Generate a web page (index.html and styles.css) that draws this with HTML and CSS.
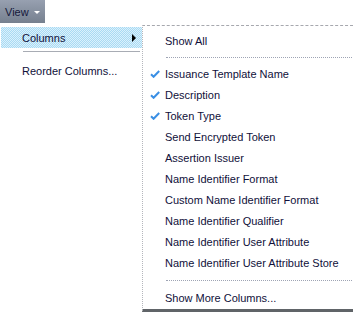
FILE: index.html
```html
<!DOCTYPE html>
<html lang="en">
<head>
  <meta charset="UTF-8">
  <title>View menu</title>
  <link rel="stylesheet" href="styles.css">
</head>
<body>
  <div class="toolbar">
    <div class="view-button">
      <span>View</span>
      <span class="caret"></span>
    </div>
  </div>

  <div class="menus">
    <div class="menu">
      <div class="menu-item active">
        <span>Columns</span>
        <span class="arrow"></span>
      </div>
      <div class="separator"></div>
      <div class="menu-item">Reorder Columns...</div>
    </div>

    <div class="submenu">
      <div class="sub-item">Show All</div>
      <div class="sub-separator"></div>
      <div class="sub-item checked">Issuance Template Name</div>
      <div class="sub-item checked">Description</div>
      <div class="sub-item checked">Token Type</div>
      <div class="sub-item">Send Encrypted Token</div>
      <div class="sub-item">Assertion Issuer</div>
      <div class="sub-item">Name Identifier Format</div>
      <div class="sub-item">Custom Name Identifier Format</div>
      <div class="sub-item">Name Identifier Qualifier</div>
      <div class="sub-item">Name Identifier User Attribute</div>
      <div class="sub-item">Name Identifier User Attribute Store</div>
      <div class="sub-separator last"></div>
      <div class="sub-item">Show More Columns...</div>
    </div>
  </div>
</body>
</html>
```

FILE: styles.css
```css
body {
  margin: 0;
  padding: 0;
  background: #ffffff;
  font-family: "Liberation Sans", Arial, sans-serif;
  font-size: 11px;
  color: #10103a;
}

.toolbar {
  height: 23px;
}

.view-button {
  display: inline-flex;
  align-items: center;
  gap: 5px;
  height: 23px;
  padding: 0 5px 0 5px;
  box-sizing: border-box;
  background: linear-gradient(#97a0b0, #76808f);
  color: #14183a;
}

.caret {
  width: 0;
  height: 0;
  border-left: 3px solid transparent;
  border-right: 3px solid transparent;
  border-top: 3px solid #ffffff;
  margin-top: 1px;
}

.menus {
  display: flex;
  margin-top: 2px;
}

.menu {
  width: 142px;
  padding-top: 2px;
}

.menu-item {
  display: flex;
  align-items: center;
  justify-content: space-between;
  height: 21px;
  margin-left: 1px;
  padding: 0 6px 0 21px;
}

.menu-item.active {
  background-color: #c4e6f8;
  background-image: repeating-conic-gradient(#a9daf3 0 25%, #dbf1fc 0 50%);
  background-size: 2px 2px;
}

.arrow {
  width: 0;
  height: 0;
  border-top: 4px solid transparent;
  border-bottom: 4px solid transparent;
  border-left: 4px solid #000000;
}

.separator {
  height: 0;
  margin: 3px 2px 8px 23px;
  border-top: 1px solid #a8acb4;
}

.submenu {
  width: 210px;
  border-top: 1px dashed #a6a8ae;
  border-left: 1px dotted #b4b6bc;
  border-bottom: 3px solid #606468;
  padding-top: 5px;
}

.sub-item {
  position: relative;
  height: 21px;
  line-height: 21px;
  padding-left: 22px;
  white-space: nowrap;
}

.sub-item.checked::before {
  content: "";
  position: absolute;
  left: 7px;
  top: 6px;
  width: 10px;
  height: 8px;
  background: url("data:image/svg+xml,%3Csvg xmlns='http://www.w3.org/2000/svg' width='10' height='8' viewBox='0 0 10 8'%3E%3Cpath d='M1 4.2 L3.6 6.8 L9.2 1' fill='none' stroke='%233a8fe4' stroke-width='2'/%3E%3C/svg%3E") no-repeat;
}

.sub-separator {
  height: 0;
  margin: 5px 1px 6px 23px;
  border-top: 1px dotted #9ea4b4;
}

.sub-separator.last {
  margin-top: 6px;
  margin-bottom: 7px;
}
```
